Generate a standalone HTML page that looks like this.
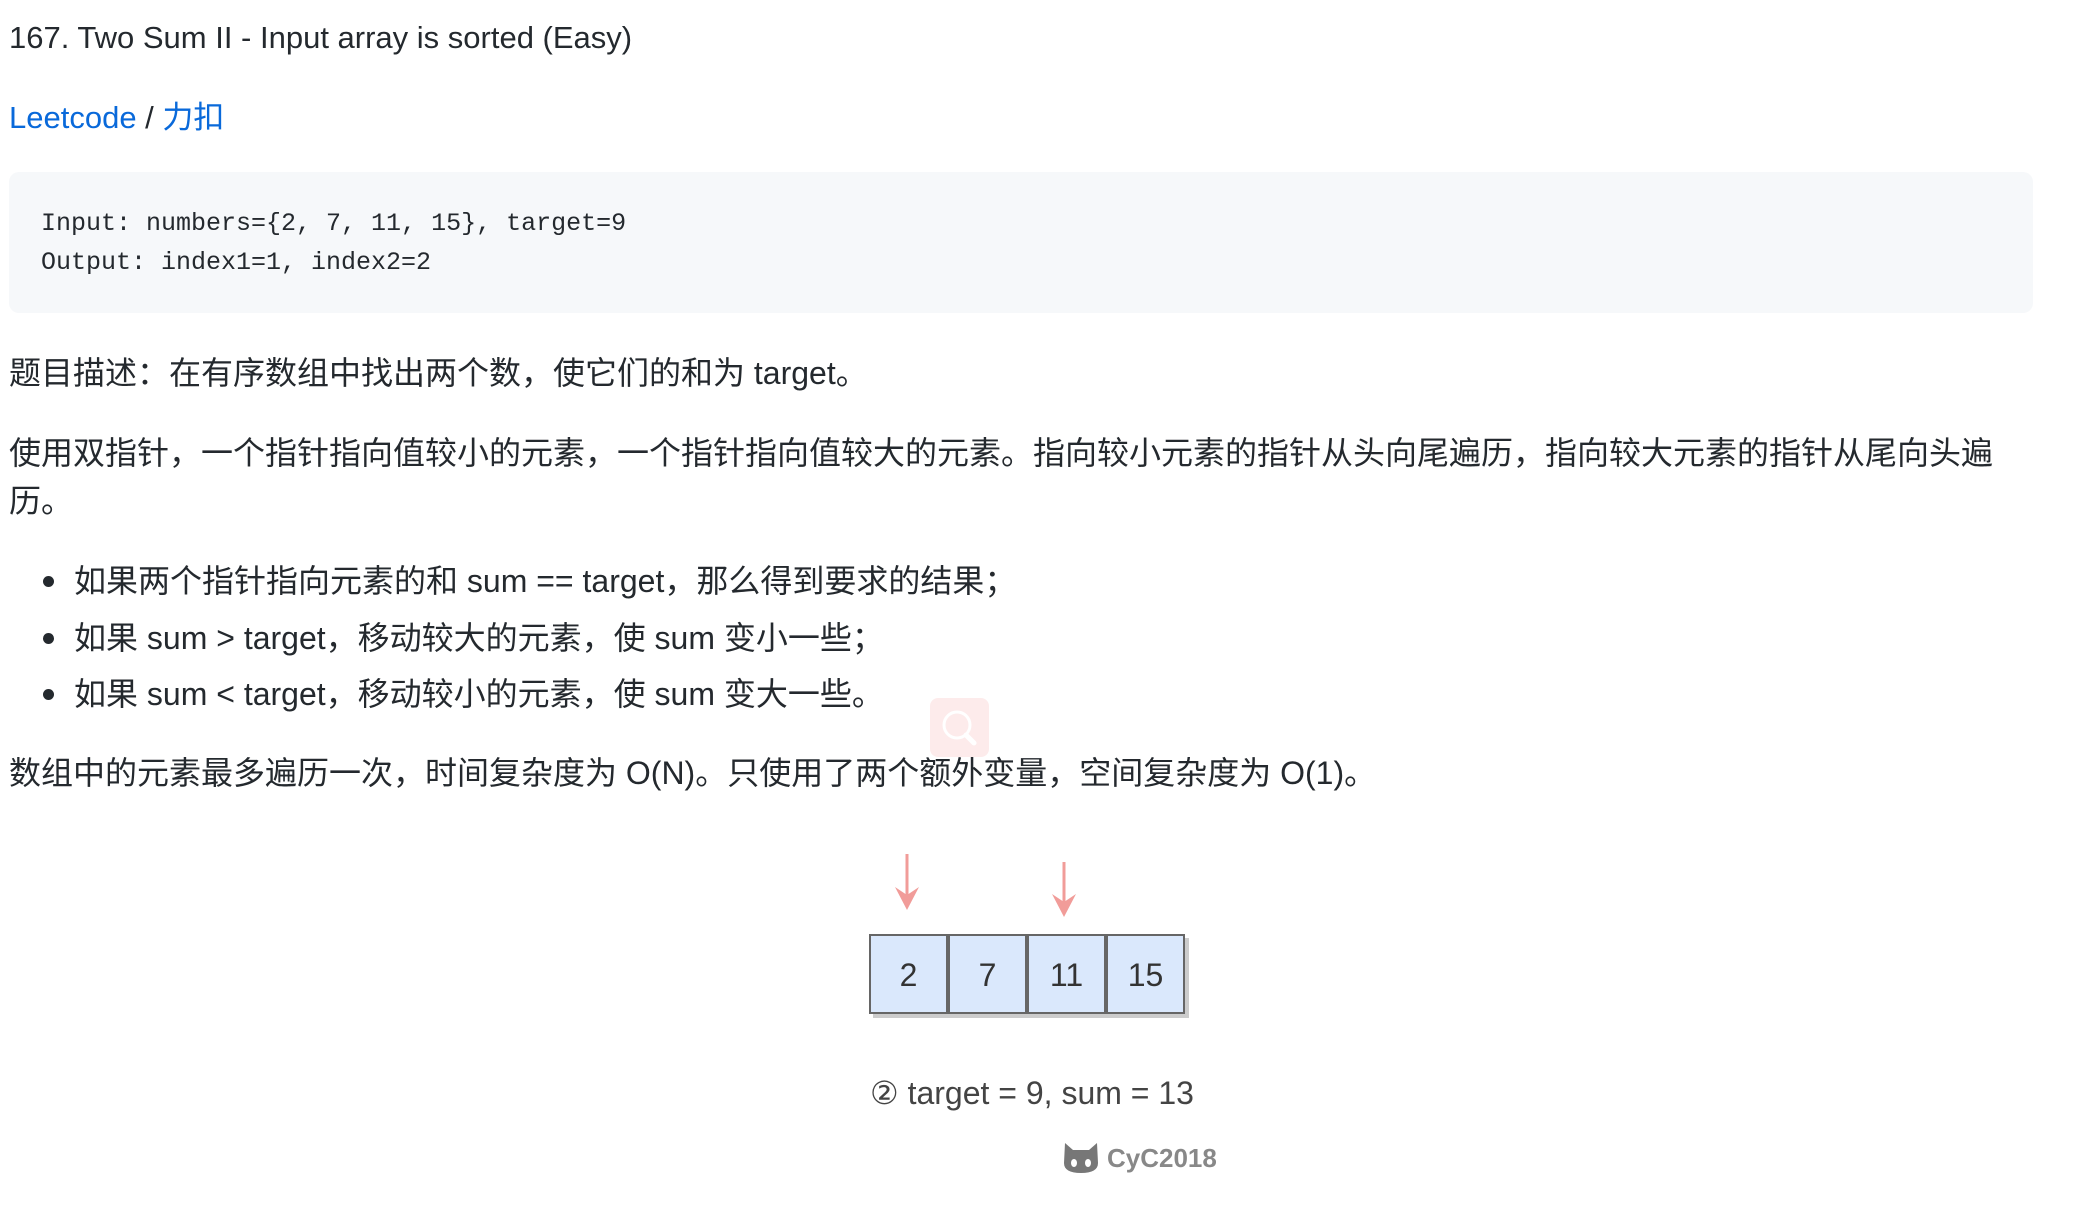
<!DOCTYPE html>
<html><head><meta charset="utf-8"><style>
html,body{margin:0;padding:0;background:#fff;width:2076px;height:1210px;overflow:hidden;}
body{font-family:"Liberation Sans","Noto Sans CJK SC",sans-serif;color:#24292e;position:relative;}
.a{position:absolute;white-space:nowrap;line-height:1;}
.t{font-size:32px;}
.code{position:absolute;left:9px;top:172px;width:2024px;height:141px;background:#f6f8fa;border-radius:10px;}
.mono{font-family:"Liberation Mono",monospace;font-size:25px;color:#24292e;}
.box{position:absolute;top:934px;width:79px;height:80px;background:#dae8fc;border:2px solid #666;box-sizing:border-box;box-shadow:4px 4px 0 #ccc;font-family:"Liberation Sans",sans-serif;font-size:32px;color:#333;text-align:center;line-height:78px;}
</style></head><body>
<div class="a" style="left:9px;top:22px;font-size:31px;">167. Two Sum II - Input array is sorted (Easy)</div>
<div class="a" style="left:9px;top:102px;font-size:31px;"><span style="color:#0969da">Leetcode</span> / <span style="color:#0969da">力扣</span></div>
<div class="code"></div>
<div class="a mono" style="left:41px;top:211px;">Input: numbers={2, 7, 11, 15}, target=9</div>
<div class="a mono" style="left:41px;top:250px;">Output: index1=1, index2=2</div>
<div class="a t" style="left:9px;top:357px;">题目描述：在有序数组中找出两个数，使它们的和为 target。</div>
<div class="a t" style="left:9px;top:437px;">使用双指针，一个指针指向值较小的元素，一个指针指向值较大的元素。指向较小元素的指针从头向尾遍历，指向较大元素的指针从尾向头遍</div>
<div class="a t" style="left:9px;top:485px;">历。</div>
<div class="a" style="left:43px;top:576px;width:11px;height:11px;border-radius:50%;background:#24292e"></div>
<div class="a" style="left:43px;top:633px;width:11px;height:11px;border-radius:50%;background:#24292e"></div>
<div class="a" style="left:43px;top:689px;width:11px;height:11px;border-radius:50%;background:#24292e"></div>
<div class="a t" style="left:74px;top:565px;">如果两个指针指向元素的和 sum == target，那么得到要求的结果；</div>
<div class="a t" style="left:74px;top:622px;">如果 sum &gt; target，移动较大的元素，使 sum 变小一些；</div>
<div class="a t" style="left:74px;top:678px;">如果 sum &lt; target，移动较小的元素，使 sum 变大一些。</div>
<div class="a t" style="left:9px;top:757px;">数组中的元素最多遍历一次，时间复杂度为 O(N)。只使用了两个额外变量，空间复杂度为 O(1)。</div>
<div class="a" style="left:930px;top:698px;width:59px;height:59px;background:#fde9e9;border-radius:8px;opacity:.9"></div>
<svg class="a" style="left:930px;top:698px" width="59" height="59"><circle cx="27" cy="27" r="13" fill="none" stroke="#fff" stroke-width="3"/><path d="M36 37 L44 45" stroke="#fff" stroke-width="5" stroke-linecap="round"/></svg>
<svg class="a" style="left:880px;top:847px" width="220" height="80">
<path d="M27 7 V52" stroke="#f19c99" stroke-width="3"/><path d="M15 40 L27 63 L39 40 L27 48Z" fill="#f19c99"/>
<path d="M184 15 V58" stroke="#f19c99" stroke-width="3"/><path d="M172 47 L184 70 L196 47 L184 55Z" fill="#f19c99"/>
</svg>
<div class="box" style="left:869px;">2</div>
<div class="box" style="left:948px;">7</div>
<div class="box" style="left:1027px;">11</div>
<div class="box" style="left:1106px;">15</div>
<div class="a" style="left:870px;top:1077px;font-size:32px;color:#444;font-family:'Liberation Sans','DejaVu Sans',sans-serif;">② target = 9, sum = 13</div>
<svg class="a" style="left:1062px;top:1141px" width="38" height="34"><path d="M3 2 L11 9 H27 L35 2 L36 22 Q36 32 19 32 Q2 32 2 22Z" fill="#777"/><ellipse cx="12" cy="22" rx="3" ry="4" fill="#fff"/><ellipse cx="26" cy="22" rx="3" ry="4" fill="#fff"/></svg>
<div class="a" style="left:1107px;top:1145px;font-size:26px;color:#888;font-weight:bold;">CyC2018</div>
</body></html>
